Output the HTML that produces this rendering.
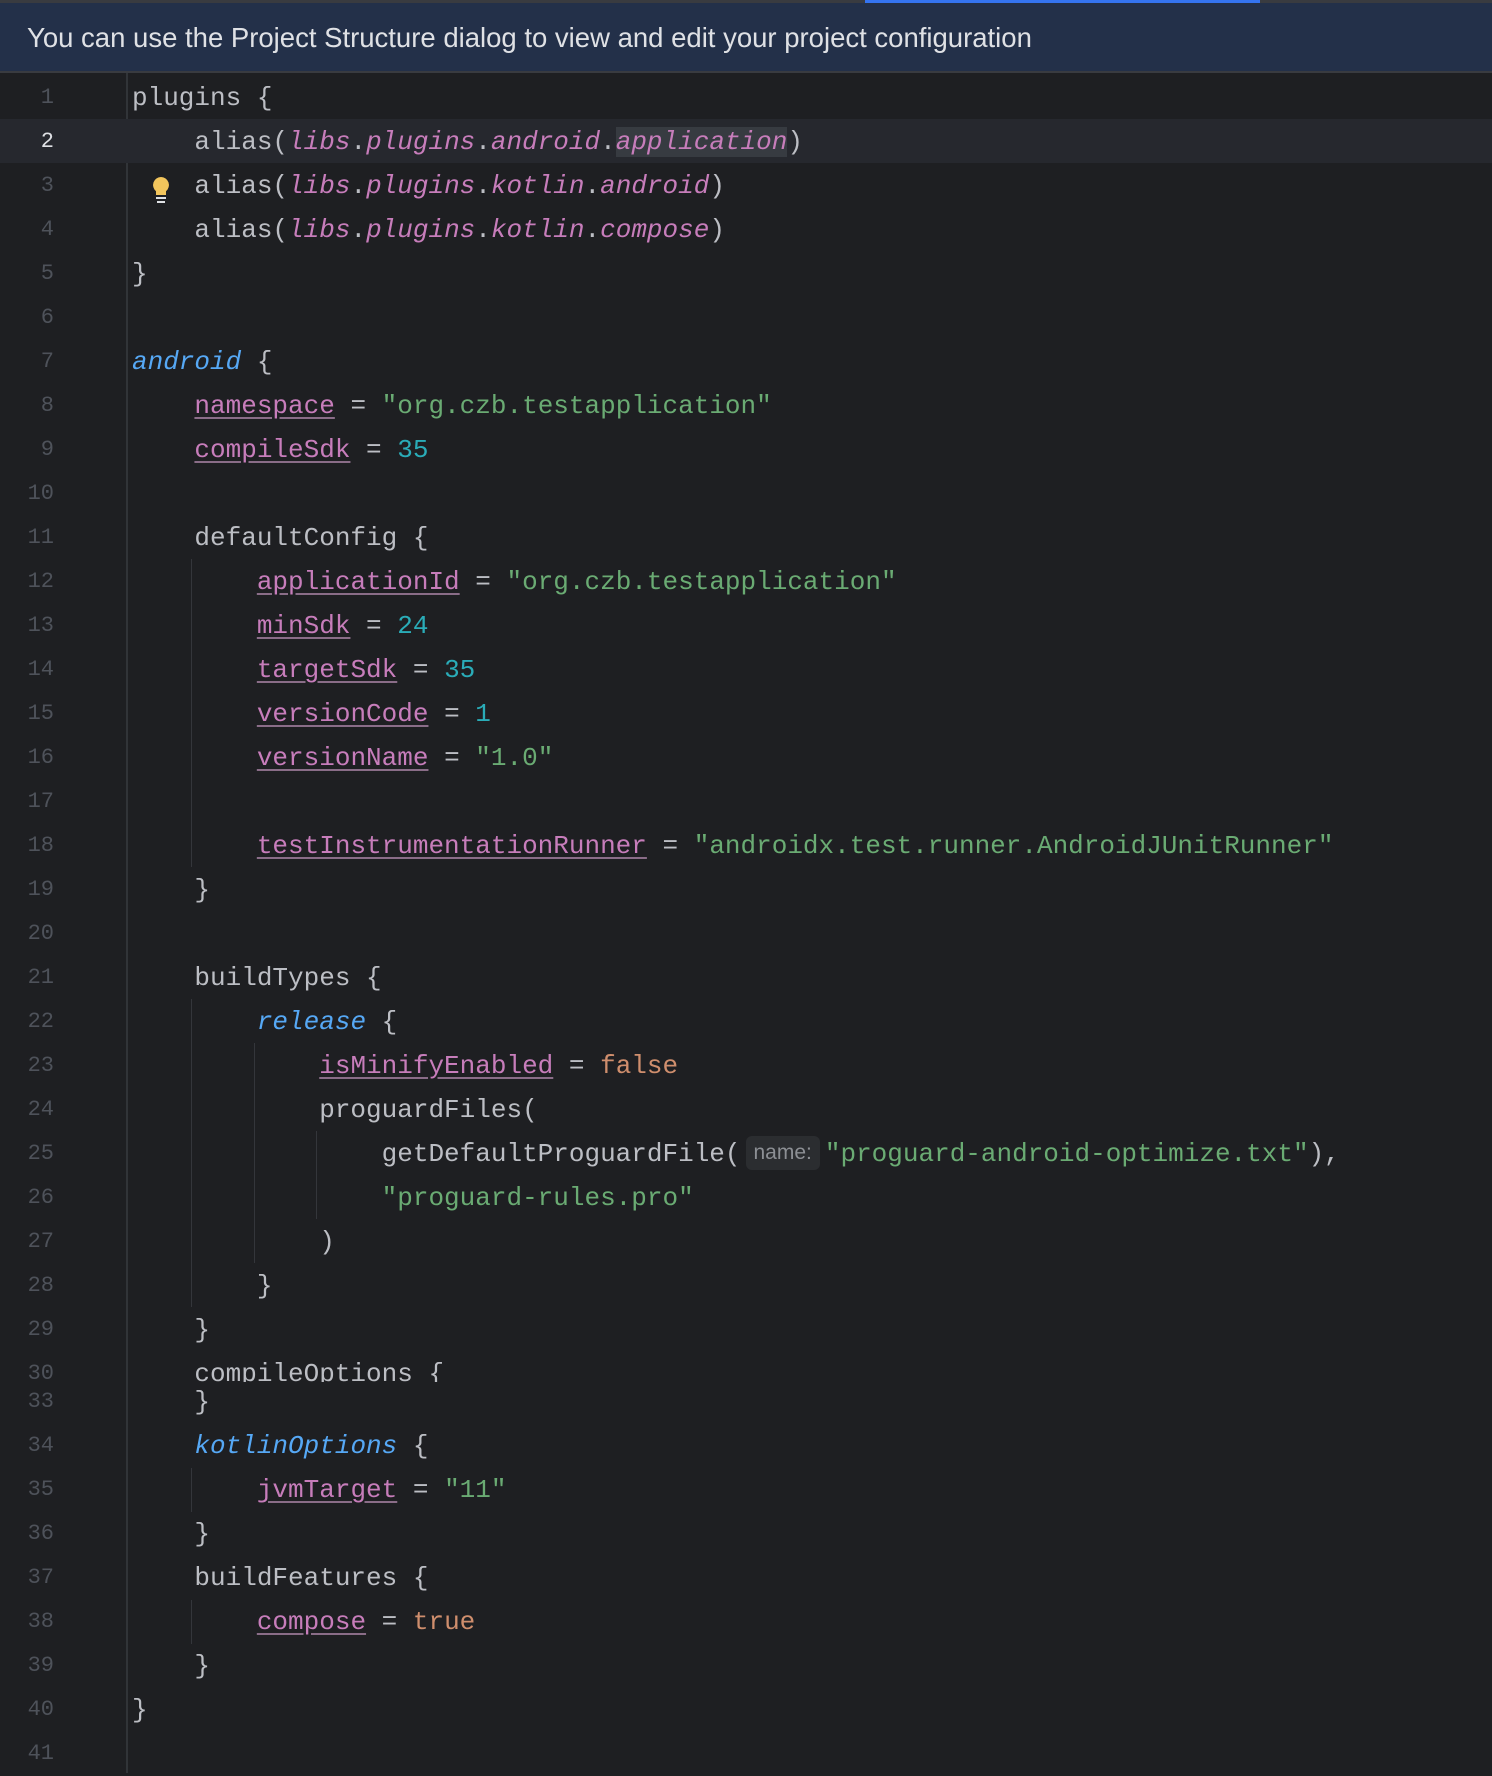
<!DOCTYPE html>
<html><head><meta charset="utf-8"><style>
body{margin:0;width:1492px;height:1756px;background:#1e1f22;overflow:hidden;position:relative;font-family:"Liberation Mono",monospace}
.top{position:absolute;left:0;top:0;width:1492px;height:3px;background:#393b40}
.topb{position:absolute;left:865px;top:0;width:395px;height:3px;background:#3574f0}
.banner{position:absolute;left:0;top:3px;width:1492px;height:70px;background:#233049;border-bottom:2px solid #393b40;color:#dfe1e5;font:27.5px "Liberation Sans",sans-serif;line-height:70px;padding-left:27px;box-sizing:border-box}
.gut{position:absolute;left:126px;top:73px;width:2px;height:1700px;background:#313438}
.row{position:absolute;left:0;width:1492px;height:44px}
.num{position:absolute;left:0;width:54px;text-align:right;color:#4e525a;font-size:22px;line-height:44px}
.code{position:absolute;left:132px;white-space:pre;color:#bcbec4;font-size:26px;line-height:44px}
.p{color:#c77dbb;font-style:italic}
.pr{color:#c77dbb;text-decoration:underline;text-decoration-color:#8a6d88;text-underline-offset:4px}
.b{color:#56a8f5;font-style:italic}
.s{color:#6aab73}.n{color:#2aacb8}.k{color:#cf8e6d}
.hl{background:#373b41}
.hint{display:inline-block;background:#2b2d30;color:#8c8f94;font:21px "Liberation Sans",sans-serif;line-height:34px;padding:0 8px;border-radius:6px;vertical-align:2px;margin:0 5px}
.g{position:absolute;width:1px;background:#34363b}
#c{position:absolute;left:0;top:3px;width:1492px;height:1756px}
</style></head><body>
<div class="top"></div><div class="topb"></div>
<div class="banner">You can use the Project Structure dialog to view and edit your project configuration</div>
<div class="gut"></div>
<div id="c">
<div class="row" style="top:116px;height:44px;background:#26282e"></div>
<div class="g" style="left:191px;top:556px;height:308px"></div>
<div class="g" style="left:191px;top:996px;height:308px"></div>
<div class="g" style="left:254px;top:1040px;height:220px"></div>
<div class="g" style="left:316px;top:1128px;height:88px"></div>
<div class="g" style="left:191px;top:1465px;height:44px"></div>
<div class="g" style="left:191px;top:1597px;height:44px"></div>
<svg style="position:absolute;left:150px;top:172px" width="22" height="32" viewBox="0 0 22 32"><path d="M11 2a8 8 0 0 0-5 14.2V20h10v-3.8A8 8 0 0 0 11 2z" fill="#f2c55c"/><rect x="6" y="22" width="10" height="2" fill="#dfe1e5"/><rect x="7" y="26" width="8" height="2" fill="#dfe1e5"/></svg>

<div class="row" style="top:73px"><div class="num">1</div><div class="code">plugins {</div></div>
<div class="row" style="top:117px"><div class="num" style="color:#dfe1e5">2</div><div class="code">    alias(<span class="p">libs</span>.<span class="p">plugins</span>.<span class="p">android</span>.<span class="p hl">application</span>)</div></div>
<div class="row" style="top:161px"><div class="num">3</div><div class="code">    alias(<span class="p">libs</span>.<span class="p">plugins</span>.<span class="p">kotlin</span>.<span class="p">android</span>)</div></div>
<div class="row" style="top:205px"><div class="num">4</div><div class="code">    alias(<span class="p">libs</span>.<span class="p">plugins</span>.<span class="p">kotlin</span>.<span class="p">compose</span>)</div></div>
<div class="row" style="top:249px"><div class="num">5</div><div class="code">}</div></div>
<div class="row" style="top:293px"><div class="num">6</div></div>
<div class="row" style="top:337px"><div class="num">7</div><div class="code"><span class="b">android</span> {</div></div>
<div class="row" style="top:381px"><div class="num">8</div><div class="code">    <span class="pr">namespace</span> = <span class="s">"org.czb.testapplication"</span></div></div>
<div class="row" style="top:425px"><div class="num">9</div><div class="code">    <span class="pr">compileSdk</span> = <span class="n">35</span></div></div>
<div class="row" style="top:469px"><div class="num">10</div></div>
<div class="row" style="top:513px"><div class="num">11</div><div class="code">    defaultConfig {</div></div>
<div class="row" style="top:557px"><div class="num">12</div><div class="code">        <span class="pr">applicationId</span> = <span class="s">"org.czb.testapplication"</span></div></div>
<div class="row" style="top:601px"><div class="num">13</div><div class="code">        <span class="pr">minSdk</span> = <span class="n">24</span></div></div>
<div class="row" style="top:645px"><div class="num">14</div><div class="code">        <span class="pr">targetSdk</span> = <span class="n">35</span></div></div>
<div class="row" style="top:689px"><div class="num">15</div><div class="code">        <span class="pr">versionCode</span> = <span class="n">1</span></div></div>
<div class="row" style="top:733px"><div class="num">16</div><div class="code">        <span class="pr">versionName</span> = <span class="s">"1.0"</span></div></div>
<div class="row" style="top:777px"><div class="num">17</div></div>
<div class="row" style="top:821px"><div class="num">18</div><div class="code">        <span class="pr">testInstrumentationRunner</span> = <span class="s">"androidx.test.runner.AndroidJUnitRunner"</span></div></div>
<div class="row" style="top:865px"><div class="num">19</div><div class="code">    }</div></div>
<div class="row" style="top:909px"><div class="num">20</div></div>
<div class="row" style="top:953px"><div class="num">21</div><div class="code">    buildTypes {</div></div>
<div class="row" style="top:997px"><div class="num">22</div><div class="code">        <span class="b">release</span> {</div></div>
<div class="row" style="top:1041px"><div class="num">23</div><div class="code">            <span class="pr">isMinifyEnabled</span> = <span class="k">false</span></div></div>
<div class="row" style="top:1085px"><div class="num">24</div><div class="code">            proguardFiles(</div></div>
<div class="row" style="top:1129px"><div class="num">25</div><div class="code">                getDefaultProguardFile(<span class="hint">name:</span><span class="s">"proguard-android-optimize.txt"</span>),</div></div>
<div class="row" style="top:1173px"><div class="num">26</div><div class="code">                <span class="s">"proguard-rules.pro"</span></div></div>
<div class="row" style="top:1217px"><div class="num">27</div><div class="code">            )</div></div>
<div class="row" style="top:1261px"><div class="num">28</div><div class="code">        }</div></div>
<div class="row" style="top:1305px"><div class="num">29</div><div class="code">    }</div></div>
<div class="row" style="top:1349px;height:30px;overflow:hidden"><div class="num">30</div><div class="code">    compileOptions {</div></div>
<div class="row" style="top:1377px"><div class="num">33</div><div class="code">    }</div></div>
<div class="row" style="top:1421px"><div class="num">34</div><div class="code">    <span class="b">kotlinOptions</span> {</div></div>
<div class="row" style="top:1465px"><div class="num">35</div><div class="code">        <span class="pr">jvmTarget</span> = <span class="s">"11"</span></div></div>
<div class="row" style="top:1509px"><div class="num">36</div><div class="code">    }</div></div>
<div class="row" style="top:1553px"><div class="num">37</div><div class="code">    buildFeatures {</div></div>
<div class="row" style="top:1597px"><div class="num">38</div><div class="code">        <span class="pr">compose</span> = <span class="k">true</span></div></div>
<div class="row" style="top:1641px"><div class="num">39</div><div class="code">    }</div></div>
<div class="row" style="top:1685px"><div class="num">40</div><div class="code">}</div></div>
<div class="row" style="top:1729px"><div class="num">41</div></div>
</div>
</body></html>
